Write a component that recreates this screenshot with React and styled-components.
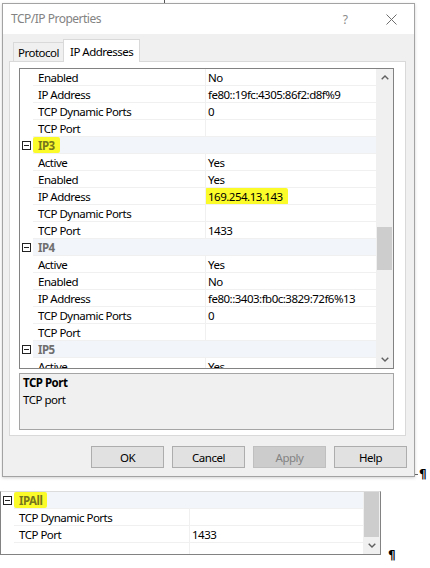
import React from "react";
import styled, { createGlobalStyle } from "styled-components";

const Global = createGlobalStyle`
  html, body { margin: 0; padding: 0; background: #fff; }
  body {
    font-family: "Noto Sans", "Segoe UI", sans-serif;
    font-size: 11.5px;
    letter-spacing: -0.5px;
    color: #000;
  }
`;

const Page = styled.div`
  width: 430px;
  height: 568px;
  overflow: hidden;
  background: #fff;
`;

const CaretMark = styled.div`
  width: 1px;
  height: 3px;
  margin-left: 164px;
  background: #555;
`;

const DialogRow = styled.div`
  display: flex;
  align-items: flex-end;
  padding-left: 2px;
`;

const Dialog = styled.div`
  width: 413px;
  box-sizing: border-box;
  border: 1px solid #a3a3a3;
  background: #f0f0f0;
  box-shadow: 0 1px 3px rgba(0, 0, 0, 0.18);
  display: flex;
  flex-direction: column;
`;

const TitleBar = styled.div`
  height: 30px;
  background: #fff;
  display: flex;
  align-items: center;
  padding-left: 8px;
`;

const TitleText = styled.span`
  flex: 1;
  color: #838383;
  font-size: 12px;
  margin-top: -1px;
`;

const TitleButton = styled.div`
  width: 46px;
  height: 30px;
  display: flex;
  align-items: center;
  justify-content: center;
  color: #8a8a8a;
  font-size: 12px;
`;

const Body = styled.div`
  display: flex;
  flex-direction: column;
  padding: 6px 8px 8px 6px;
`;

const TabStrip = styled.div`
  display: flex;
  align-items: flex-end;
  padding-left: 4px;
  height: 22px;
  margin-bottom: -1px;
  position: relative;
  z-index: 1;
`;

const Tab = styled.div`
  box-sizing: border-box;
  height: ${(p) => (p.$active ? 23 : 20)}px;
  padding: 0 ${(p) => (p.$active ? 6 : 4)}px;
  border: 1px solid #d9d9d9;
  border-bottom: ${(p) => (p.$active ? "none" : "1px solid #d9d9d9")};
  margin-left: ${(p) => (p.$active ? -1 : 0)}px;
  background: ${(p) => (p.$active ? "#fff" : "#f0f0f0")};
  display: flex;
  align-items: center;
  white-space: nowrap;
`;

const Panel = styled.div`
  border: 1px solid #d9d9d9;
  background: #fff;
  padding: 6px 11px 5px 9px;
  display: flex;
  flex-direction: column;
  gap: 4px;
`;

const Grid = styled.div`
  display: flex;
  border: 1px solid #828282;
  border-top-color: ${(p) => p.$topColor || "#828282"};
  height: ${(p) => p.$h}px;
  width: ${(p) => (p.$w ? `${p.$w}px` : "auto")};
  background: #fff;
`;

const GridRows = styled.div`
  flex: 1;
  min-width: 0;
  overflow: hidden;
  display: flex;
  flex-direction: column;
`;

const Row = styled.div`
  display: flex;
  height: 17px;
  flex-shrink: 0;
`;

const Gutter = styled.div`
  width: 13px;
  flex-shrink: 0;
  display: flex;
  align-items: center;
`;

const Expander = styled.span`
  width: 9px;
  height: 9px;
  box-sizing: border-box;
  margin-left: 2px;
  border: 1px solid #222;
  display: flex;
  align-items: center;
  justify-content: center;
  &::after {
    content: "";
    width: 5px;
    height: 1px;
    background: #222;
  }
`;

const Cells = styled.div`
  flex: 1;
  min-width: 0;
  display: flex;
  box-sizing: border-box;
  border-bottom: 1px solid #f0f0f0;
  background: ${(p) => (p.$category ? "#f2f5fa" : "#fff")};
`;

const NameCell = styled.div`
  width: ${(p) => p.$w}px;
  flex-shrink: 0;
  box-sizing: border-box;
  border-right: 1px solid #f0f0f0;
  padding-left: 5px;
  display: flex;
  align-items: center;
  white-space: nowrap;
  overflow: hidden;
`;

const ValueCell = styled.div`
  flex: 1;
  min-width: 0;
  padding-left: 2px;
  display: flex;
  align-items: center;
  white-space: nowrap;
  overflow: hidden;
`;

const CategoryLabel = styled.span`
  align-self: stretch;
  display: flex;
  align-items: center;
  padding: 0 5px 0 5px;
  font-weight: bold;
  color: ${(p) => (p.$mark ? "#76761c" : "#6f6f6f")};
  background: ${(p) => (p.$mark ? "#fbfb2a" : "transparent")};
  border-radius: 2px;
`;

const Marked = styled.span`
  background: #fbfb2a;
  margin-left: -3px;
  padding: 1px 5px 1px 3px;
  border-radius: 2px;
`;

const ScrollBar = styled.div`
  width: 17px;
  flex-shrink: 0;
  background: #f0f0f0;
  display: flex;
  flex-direction: column;
`;

const ArrowBtn = styled.div`
  height: 17px;
  flex-shrink: 0;
  display: flex;
  align-items: center;
  justify-content: center;
`;

const Track = styled.div`
  flex: 1;
  display: flex;
  flex-direction: column;
`;

const Thumb = styled.div`
  margin: ${(p) => p.$top}px 1px 0 1px;
  height: ${(p) => p.$h}px;
  background: #cdcdcd;
`;

const Description = styled.div`
  height: 57px;
  box-sizing: border-box;
  border: 1px solid #a5a5a5;
  background: #f0f0f0;
  padding: 0 3px;
  line-height: 17px;
`;

const DescTitle = styled.div`
  font-weight: bold;
`;

const ButtonRow = styled.div`
  display: flex;
  justify-content: flex-end;
  gap: 8px;
  margin-top: 10px;
  margin-right: -1px;
`;

const Button = styled.div`
  width: 73px;
  height: 22px;
  box-sizing: border-box;
  border: 1px solid ${(p) => (p.$disabled ? "#bfbfbf" : "#adadad")};
  background: ${(p) => (p.$disabled ? "#cccccc" : "#e1e1e1")};
  color: ${(p) => (p.$disabled ? "#838383" : "#000")};
  display: flex;
  align-items: center;
  justify-content: center;
`;

const Pilcrow = styled.span`
  font-family: "DejaVu Sans", sans-serif;
  font-size: 12px;
  font-weight: bold;
  letter-spacing: 0;
  line-height: 12px;
  margin-left: ${(p) => p.$ml || 0}px;
  margin-bottom: ${(p) => p.$mb || 0}px;
  display: flex;
  align-items: center;
  &::before {
    content: "";
    width: ${(p) => p.$dash || 0}px;
    height: 1px;
    background: #666;
    margin-right: 1px;
  }
`;

const SnippetRow = styled.div`
  display: flex;
  align-items: flex-end;
  margin-top: 14px;
`;

const Chevron = ({ up }) => (
  <svg width="8" height="5" viewBox="0 0 8 5">
    <polyline
      points={up ? "0.7,4.3 4,1 7.3,4.3" : "0.7,0.7 4,4 7.3,0.7"}
      fill="none"
      stroke="#606060"
      strokeWidth="1.4"
    />
  </svg>
);

const CloseIcon = () => (
  <svg width="11" height="11" viewBox="0 0 11 11">
    <path d="M0.5 0.5 L10.5 10.5 M10.5 0.5 L0.5 10.5" stroke="#6e6e6e" strokeWidth="1" />
  </svg>
);

const GridRow = ({ r, nameWidth }) =>
  r.cat ? (
    <Row>
      <Gutter>
        <Expander />
      </Gutter>
      <Cells $category>
        <CategoryLabel $mark={r.mark}>{r.cat}</CategoryLabel>
      </Cells>
    </Row>
  ) : (
    <Row>
      <Gutter />
      <Cells>
        <NameCell $w={nameWidth}>{r.n}</NameCell>
        <ValueCell>{r.mark ? <Marked>{r.v}</Marked> : r.v}</ValueCell>
      </Cells>
    </Row>
  );

const topRows = [
  { n: "Enabled", v: "No" },
  { n: "IP Address", v: "fe80::19fc:4305:86f2:d8f%9" },
  { n: "TCP Dynamic Ports", v: "0" },
  { n: "TCP Port", v: "" },
  { cat: "IP3", mark: true },
  { n: "Active", v: "Yes" },
  { n: "Enabled", v: "Yes" },
  { n: "IP Address", v: "169.254.13.143", mark: true },
  { n: "TCP Dynamic Ports", v: "" },
  { n: "TCP Port", v: "1433" },
  { cat: "IP4" },
  { n: "Active", v: "Yes" },
  { n: "Enabled", v: "No" },
  { n: "IP Address", v: "fe80::3403:fb0c:3829:72f6%13" },
  { n: "TCP Dynamic Ports", v: "0" },
  { n: "TCP Port", v: "" },
  { cat: "IP5" },
  { n: "Active", v: "Yes" },
];

const bottomRows = [
  { cat: "IPAll", mark: true },
  { n: "TCP Dynamic Ports", v: "" },
  { n: "TCP Port", v: "1433" },
  { n: "", v: "" },
];

export default function App() {
  return (
    <Page>
      <Global />
      <CaretMark />
      <DialogRow>
        <Dialog>
          <TitleBar>
            <TitleText>TCP/IP Properties</TitleText>
            <TitleButton>?</TitleButton>
            <TitleButton>
              <CloseIcon />
            </TitleButton>
          </TitleBar>
          <Body>
            <TabStrip>
              <Tab>Protocol</Tab>
              <Tab $active>IP Addresses</Tab>
            </TabStrip>
            <Panel>
              <Grid $h={299}>
                <GridRows>
                  {topRows.map((r, i) => (
                    <GridRow key={i} r={r} nameWidth={173} />
                  ))}
                </GridRows>
                <ScrollBar>
                  <ArrowBtn>
                    <Chevron up />
                  </ArrowBtn>
                  <Track>
                    <Thumb $top={141} $h={43} />
                  </Track>
                  <ArrowBtn>
                    <Chevron />
                  </ArrowBtn>
                </ScrollBar>
              </Grid>
              <Description>
                <DescTitle>TCP Port</DescTitle>
                <div>TCP port</div>
              </Description>
            </Panel>
            <ButtonRow>
              <Button>OK</Button>
              <Button>Cancel</Button>
              <Button $disabled>Apply</Button>
              <Button>Help</Button>
            </ButtonRow>
          </Body>
        </Dialog>
        <Pilcrow $mb={-3} $dash={3}>¶</Pilcrow>
      </DialogRow>
      <SnippetRow>
        <Grid $h={62} $w={379} $topColor="#dcdcdc">
          <GridRows>
            {bottomRows.map((r, i) => (
              <GridRow key={i} r={r} nameWidth={176} />
            ))}
          </GridRows>
          <ScrollBar>
            <Track>
              <Thumb $top={0} $h={45} />
            </Track>
            <ArrowBtn>
              <Chevron />
            </ArrowBtn>
          </ScrollBar>
        </Grid>
        <Pilcrow $ml={6} $mb={-6}>¶</Pilcrow>
      </SnippetRow>
    </Page>
  );
}
